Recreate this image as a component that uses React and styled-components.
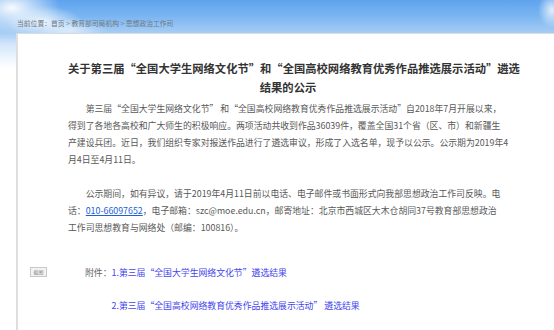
import React from 'react'
import styled, { createGlobalStyle } from 'styled-components'

const GlobalStyle = createGlobalStyle`
  html, body {
    margin: 0;
    padding: 0;
    height: 100%;
  }
  body {
    font-family: "Noto Sans CJK SC", "Noto Sans", sans-serif;
    background:
      radial-gradient(ellipse 48px 26px at 12px 8px, rgba(255,255,255,0.95), rgba(255,255,255,0) 100%),
      radial-gradient(ellipse 38px 16px at 44px 22px, rgba(255,255,255,0.8), rgba(255,255,255,0) 100%),
      radial-gradient(ellipse 34px 12px at 72px 30px, rgba(255,255,255,0.6), rgba(255,255,255,0) 100%),
      radial-gradient(ellipse 14px 18px at 552px 10px, rgba(255,255,255,0.8), rgba(255,255,255,0) 100%),
      linear-gradient(to bottom, #5fa3ee 0, #7ab5f1 16px, #a6cdf5 33px, #d2e6fa 44px, #ffffff 68px);
    overflow: hidden;
  }
`

const Page = styled.div`
  display: flex;
  flex-direction: column;
  min-height: 330px;
`

const Crumbs = styled.div`
  height: 33px;
  box-sizing: border-box;
  padding: 19px 0 0 17px;
  font-size: 6.8px;
  line-height: 9px;
  color: #6f7782;
  white-space: pre;
`

const Panel = styled.div`
  position: relative;
  flex: 1;
  margin-left: 16px;
  background: #fff;
  border-top: 1px solid #d9dde2;
  border-left: 2px solid #dedede;
  padding: 25px 0 0 50px;
`

const Column = styled.div`
  width: 436px;
  color: #585858;
`

const Title = styled.h1`
  margin: 0 -4px 0 0;
  font-size: 11.3px;
  line-height: 19px;
  font-weight: 700;
  color: #333;
  text-align: center;
  white-space: nowrap;
`

const Para = styled.p`
  margin: ${p => p.$top || 0}px 0 0;
  font-size: 8.85px;
  line-height: 17px;
  text-indent: 2em;
  white-space: nowrap;
`

const Phone = styled.a`
  color: #1c5fd6;
  text-decoration: underline;
`

const Attachments = styled.div`
  display: grid;
  grid-template-columns: auto 1fr;
  row-gap: 16px;
  margin-top: 28px;
  padding-left: 17px;
  font-size: 8.85px;
  line-height: 17px;
  white-space: nowrap;
`

const Label = styled.span`
  color: #666;
`

const FileLink = styled.a`
  grid-column: 2;
  color: #4444ee;
  text-decoration: none;
`

const ShotButton = styled.span`
  position: absolute;
  left: 12px;
  top: 233px;
  width: 17px;
  height: 10px;
  box-sizing: border-box;
  border: 1px solid #c8c8c8;
  background: #f3f3f3;
  font-size: 5px;
  line-height: 8px;
  text-align: center;
  color: #888;
`

export default function App() {
  return (
    <Page>
      <GlobalStyle />
      <Crumbs>当前位置：首页 &gt; 教育部司局机构 &gt; 思想政治工作司</Crumbs>
      <Panel>
        <ShotButton>截图</ShotButton>
        <Column>
          <Title>
            关于第三届“全国大学生网络文化节”和“全国高校网络教育优秀作品推选展示活动”遴选
            <br />
            结果的公示
          </Title>
          <Para $top={3}>
            第三届“全国大学生网络文化节” 和“全国高校网络教育优秀作品推选展示活动”自2018年7月开展以来，
            <br />
            得到了各地各高校和广大师生的积极响应。两项活动共收到作品36039件，覆盖全国31个省（区、市）和新疆生
            <br />
            产建设兵团。近日，我们组织专家对报送作品进行了遴选审议，形成了入选名单，现予以公示。公示期为2019年4
            <br />
            月4日至4月11日。
          </Para>
          <Para $top={17}>
            公示期间，如有异议，请于2019年4月11日前以电话、电子邮件或书面形式向我部思想政治工作司反映。电
            <br />
            话：<Phone href="#">010-66097652</Phone>，电子邮箱：szc@moe.edu.cn，邮寄地址：北京市西城区大木仓胡同37号教育部思想政治
            <br />
            工作司思想教育与网络处（邮编：100816）。
          </Para>
          <Attachments>
            <Label>附件：</Label>
            <FileLink href="#">1.第三届“全国大学生网络文化节”遴选结果</FileLink>
            <FileLink href="#">2.第三届“全国高校网络教育优秀作品推选展示活动” 遴选结果</FileLink>
          </Attachments>
        </Column>
      </Panel>
    </Page>
  )
}
